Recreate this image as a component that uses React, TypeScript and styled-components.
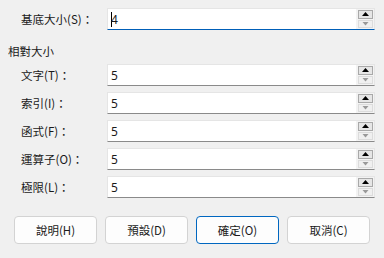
import React, { FC } from 'react';
import styled, { createGlobalStyle } from 'styled-components';

const GlobalStyle = createGlobalStyle`
  html, body {
    margin: 0;
    padding: 0;
    background: #f0f0f0;
  }
  * {
    box-sizing: border-box;
  }
`;

const Dialog = styled.div`
  width: 384px;
  height: 258px;
  padding: 8px 9px 0 8px;
  background: #f0f0f0;
  color: #1a1a1a;
  font-family: 'Noto Sans CJK TC', 'Noto Sans', sans-serif;
  font-size: 11.5px;
`;

const Rows = styled.div`
  display: flex;
  flex-direction: column;
  gap: 6px;
`;

const Row = styled.div`
  display: flex;
  align-items: center;
  height: 22px;
  padding-left: 13px;
`;

const Label = styled.span`
  width: 86px;
  flex: none;
  white-space: nowrap;
`;

const Heading = styled.div`
  margin: 13px 0 5px;
  line-height: 16px;
`;

const Field = styled.div<{ $focused?: boolean }>`
  flex: 1;
  display: flex;
  height: 22px;
  background: #ffffff;
  border: 1px solid #e5e5e5;
  border-bottom: 1px solid ${(p) => (p.$focused ? '#005fb8' : '#8a8a8a')};
`;

const Value = styled.div`
  flex: 1;
  display: flex;
  align-items: center;
  padding-left: 3px;
  font-family: 'Noto Sans', sans-serif;
  font-size: 12px;
`;

const Caret = styled.span`
  width: 1px;
  height: 15px;
  background: #000;
  margin-right: -1px;
`;

const Spinner = styled.div`
  width: 18px;
  display: flex;
  flex-direction: column;
  gap: 1px;
  padding: 1px 1px 1px 2px;
  background: #f3f3f3;
`;

const SpinButton = styled.div<{ $active?: boolean }>`
  flex: 1;
  display: flex;
  align-items: center;
  justify-content: center;
  border: 1px solid ${(p) => (p.$active ? '#a9a9a9' : '#dcdcdc')};
  background: ${(p) => (p.$active ? '#e6e6e6' : '#f0f0f0')};
`;

const Buttons = styled.div`
  display: grid;
  grid-template-columns: repeat(4, 83px);
  column-gap: 8px;
  margin-top: 18px;
  padding-left: 6px;
`;

const Button = styled.button<{ $primary?: boolean }>`
  height: 28px;
  padding: 0;
  border-radius: 4px;
  border: 1px solid ${(p) => (p.$primary ? '#0067c0' : '#d3d3d3')};
  background: #fdfdfd;
  color: #1a1a1a;
  font-family: 'Noto Sans CJK TC', 'Noto Sans', sans-serif;
  font-size: 11.5px;
`;

const Arrow: FC<{ up?: boolean }> = ({ up }) => (
  <svg width="7" height="4" viewBox="0 0 7 4">
    <polygon
      points={up ? '3.5,0 7,4 0,4' : '0.5,0 6.5,0 3.5,3.5'}
      fill={up ? '#000' : '#999'}
    />
  </svg>
);

type SpinFieldProps = {
  label: string;
  value: string;
  focused?: boolean;
};

const SpinField: FC<SpinFieldProps> = ({ label, value, focused }) => (
  <Row>
    <Label>{label}</Label>
    <Field $focused={focused}>
      <Value>
        {focused && <Caret />}
        {value}
      </Value>
      <Spinner>
        <SpinButton $active>
          <Arrow up />
        </SpinButton>
        <SpinButton>
          <Arrow />
        </SpinButton>
      </Spinner>
    </Field>
  </Row>
);

const relative = [
  { label: '文字(T)：', value: '5' },
  { label: '索引(I)：', value: '5' },
  { label: '函式(F)：', value: '5' },
  { label: '運算子(O)：', value: '5' },
  { label: '極限(L)：', value: '5' },
];

export default function App() {
  return (
    <Dialog>
      <GlobalStyle />
      <SpinField label="基底大小(S)：" value="4" focused />
      <Heading>相對大小</Heading>
      <Rows>
        {relative.map((r) => (
          <SpinField key={r.label} label={r.label} value={r.value} />
        ))}
      </Rows>
      <Buttons>
        <Button>說明(H)</Button>
        <Button>預設(D)</Button>
        <Button $primary>確定(O)</Button>
        <Button>取消(C)</Button>
      </Buttons>
    </Dialog>
  );
}
